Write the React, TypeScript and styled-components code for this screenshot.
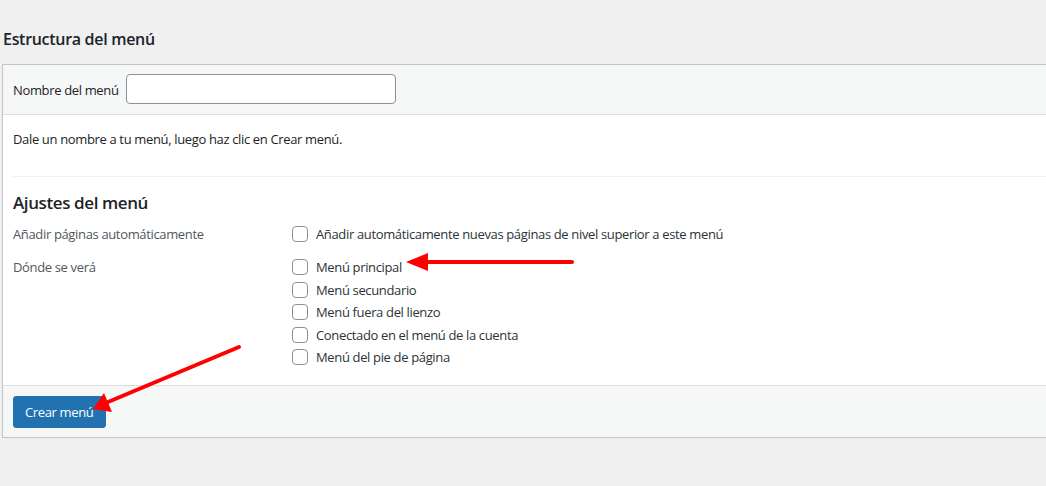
import styled, { createGlobalStyle } from "styled-components"

const GlobalStyle = createGlobalStyle`
    body {
        margin: 0;
        background: #f0f0f1;
        font-family: "Open Sans", "Noto Sans", sans-serif;
        color: #1d2327;
        overflow: hidden;
    }
`

const locations = [
    "Menú principal",
    "Menú secundario",
    "Menú fuera del lienzo",
    "Conectado en el menú de la cuenta",
    "Menú del pie de página",
]

function App() {
    return (
        <>
            <GlobalStyle />
            <Page>
                <Title>Estructura del menú</Title>
                <Panel>
                    <Header>
                        <Label htmlFor="menu-name">Nombre del menú</Label>
                        <NameInput id="menu-name" type="text" />
                    </Header>
                    <Body>
                        <Hint>Dale un nombre a tu menú, luego haz clic en Crear menú.</Hint>
                        <Divider />
                        <SettingsTitle>Ajustes del menú</SettingsTitle>
                        <SettingRow $first>
                            <SettingLabel>Añadir páginas automáticamente</SettingLabel>
                            <Options>
                                <Option>
                                    <Box type="checkbox" />
                                    Añadir automáticamente nuevas páginas de nivel superior a este menú
                                </Option>
                            </Options>
                        </SettingRow>
                        <SettingRow>
                            <SettingLabel>Dónde se verá</SettingLabel>
                            <Options>
                                {locations.map((l) => (
                                    <Option key={l}>
                                        <Box type="checkbox" />
                                        {l}
                                    </Option>
                                ))}
                            </Options>
                        </SettingRow>
                    </Body>
                    <Footer>
                        <PrimaryButton>Crear menú</PrimaryButton>
                    </Footer>
                </Panel>
                <Arrows width="1046" height="486" viewBox="0 0 1046 486">
                    <line x1="572" y1="262" x2="420" y2="262" stroke="#ff0000" strokeWidth="4" strokeLinecap="round" />
                    <polygon points="406,262 428,253 428,271" fill="#ff0000" />
                    <line x1="239" y1="347" x2="108" y2="402" stroke="#ff0000" strokeWidth="4" strokeLinecap="round" />
                    <polygon points="93,409 104,393 112,412" fill="#ff0000" />
                </Arrows>
            </Page>
        </>
    )
}

export default App

const Page = styled.div`
    position: relative;
    width: 1046px;
    height: 486px;
    padding-top: 29px;
    box-sizing: border-box;
    letter-spacing: -0.35px;
`

const Title = styled.h2`
    margin: 0 0 14px 3px;
    font-size: 16px;
    font-weight: 600;
    line-height: 21px;
    letter-spacing: -0.3px;
    color: #1d2327;
`

const Panel = styled.div`
    margin-left: 2px;
    width: 1080px;
    border: 1px solid #c3c4c7;
    background: #fff;
`

const Header = styled.div`
    height: 50px;
    box-sizing: border-box;
    padding: 0 10px;
    display: flex;
    align-items: center;
    gap: 7px;
    background: #f6f7f7;
    border-bottom: 1px solid #dcdcde;
`

const Label = styled.label`
    font-size: 13px;
    color: #1d2327;
`

const NameInput = styled.input`
    width: 270px;
    height: 30px;
    box-sizing: border-box;
    border: 1px solid #8c8f94;
    border-radius: 4px;
    background: #fff;
    outline: none;
    margin-top: -1px;
`

const Body = styled.div`
    padding: 15px 0 18px 10px;
`

const Hint = styled.p`
    margin: 0;
    font-size: 13px;
    line-height: 19px;
`

const Divider = styled.hr`
    margin: 27px 0 0;
    border: none;
    border-top: 1px solid #f0f0f1;
`

const SettingsTitle = styled.h3`
    margin: 14px 0 9px;
    font-size: 17px;
    font-weight: 600;
    line-height: 24px;
    letter-spacing: -0.4px;
`

const SettingRow = styled.div<{ $first?: boolean }>`
    display: flex;
    margin-bottom: ${({ $first }) => ($first ? "13px" : "0")};
`

const SettingLabel = styled.div`
    width: 279px;
    flex-shrink: 0;
    font-size: 13px;
    line-height: 20px;
    color: #50575e;
`

const Options = styled.div`
    display: flex;
    flex-direction: column;
    gap: 2.5px;
`

const Option = styled.label`
    display: flex;
    align-items: center;
    gap: 8px;
    font-size: 13px;
    line-height: 20px;
    color: #2c3338;
`

const Box = styled.input`
    appearance: none;
    margin: 0;
    width: 16px;
    height: 16px;
    border: 1px solid #8c8f94;
    border-radius: 4px;
    background: #fff;
`

const Footer = styled.div`
    padding: 10px 10px 9px;
    background: #f6f7f7;
    border-top: 1px solid #dcdcde;
`

const PrimaryButton = styled.button`
    height: 32px;
    padding: 0 11px;
    border: 1px solid #2271b1;
    border-radius: 3px;
    background: #2271b1;
    color: #fff;
    font-family: inherit;
    font-size: 13px;
    letter-spacing: -0.35px;
`

const Arrows = styled.svg`
    position: absolute;
    left: 0;
    top: 0;
    pointer-events: none;
`
